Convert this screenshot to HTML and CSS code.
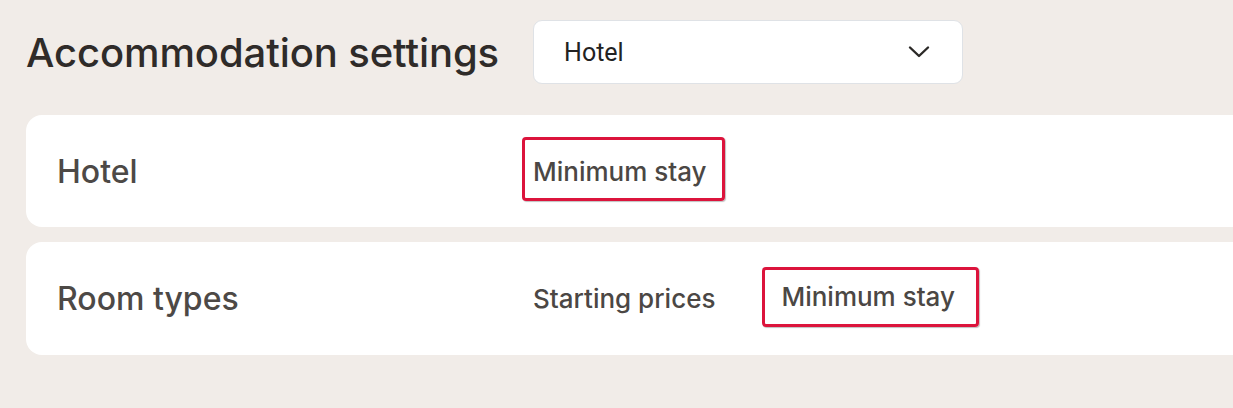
FILE: index.html
```html
<!DOCTYPE html>
<html lang="en">
  <head>
    <meta charset="UTF-8" />
    <meta name="viewport" content="width=device-width, initial-scale=1.0" />
    <title>Accommodation settings</title>
    <link rel="stylesheet" href="styles.css">
  </head>
  <body>
    <main class="page">
      <header class="page-head">
        <h1 class="page-title">Accommodation settings</h1>
        <div class="select">
          <span class="select-value">Hotel</span>
          <svg class="select-arrow" width="22" height="14" viewBox="0 0 22 14">
            <path d="M2 2.5 L11 11 L20 2.5" fill="none" stroke="#2b2927" stroke-width="2.4" stroke-linecap="round" stroke-linejoin="round" />
          </svg>
        </div>
      </header>

      <section class="card">
        <h2 class="card-title">Hotel</h2>
        <nav class="tabs">
          <span class="tab tab-marked tab-first">Minimum stay</span>
        </nav>
      </section>

      <section class="card card-second">
        <h2 class="card-title">Room types</h2>
        <nav class="tabs">
          <span class="tab">Starting prices</span>
          <span class="tab tab-marked tab-wide">Minimum stay</span>
        </nav>
      </section>
    </main>
  </body>
</html>
```

FILE: styles.css
```css
html {
  height: 100%;
}

body {
  margin: 0;
  min-height: 100%;
  background-color: #f1ece8;
  font-family: Inter, "Noto Sans", sans-serif;
  overflow: hidden;
}

.page {
  padding: 20px 0 0 26px;
}

.page-head {
  display: flex;
  align-items: center;
  gap: 34px;
  height: 64px;
}

.page-title {
  margin: 0;
  font-size: 40px;
  font-weight: 500;
  letter-spacing: -0.1px;
  color: #2f2b29;
}

.select {
  box-sizing: border-box;
  width: 430px;
  height: 64px;
  display: flex;
  align-items: center;
  justify-content: space-between;
  padding: 0 32px 0 30px;
  background-color: white;
  border: 1px solid #dfe2e6;
  border-radius: 9px;
}

.select-value {
  font-family: Roboto, "Liberation Sans", sans-serif;
  font-size: 25px;
  color: #222;
}

.card {
  box-sizing: border-box;
  width: 1240px;
  height: 112px;
  margin-top: 31px;
  display: flex;
  align-items: center;
  padding-left: 31px;
  background-color: white;
  border-radius: 16px;
}

.card-second {
  margin-top: 15px;
  height: 113px;
}

.card-title {
  margin: 0;
  width: 476px;
  font-size: 32px;
  font-weight: 500;
  letter-spacing: 0;
  color: #4d4946;
}

.tabs {
  display: flex;
  align-items: center;
}

.tab {
  font-size: 26px;
  font-weight: 450;
  color: #4b4744;
  line-height: 1;
}

.tab-marked {
  box-sizing: border-box;
  display: flex;
  align-items: center;
  border: 3px solid #dc143c;
  border-radius: 4px;
  box-shadow: 1px 1px 1px rgba(0, 0, 0, 0.25);
}

.tab-first {
  height: 64px;
  margin-left: -11px;
  margin-top: -4px;
  padding: 5px 15px 0 8px;
}

.tab-wide {
  height: 60px;
  margin-left: 47px;
  margin-top: -3px;
  padding: 0 21px 0 16px;
}
```
